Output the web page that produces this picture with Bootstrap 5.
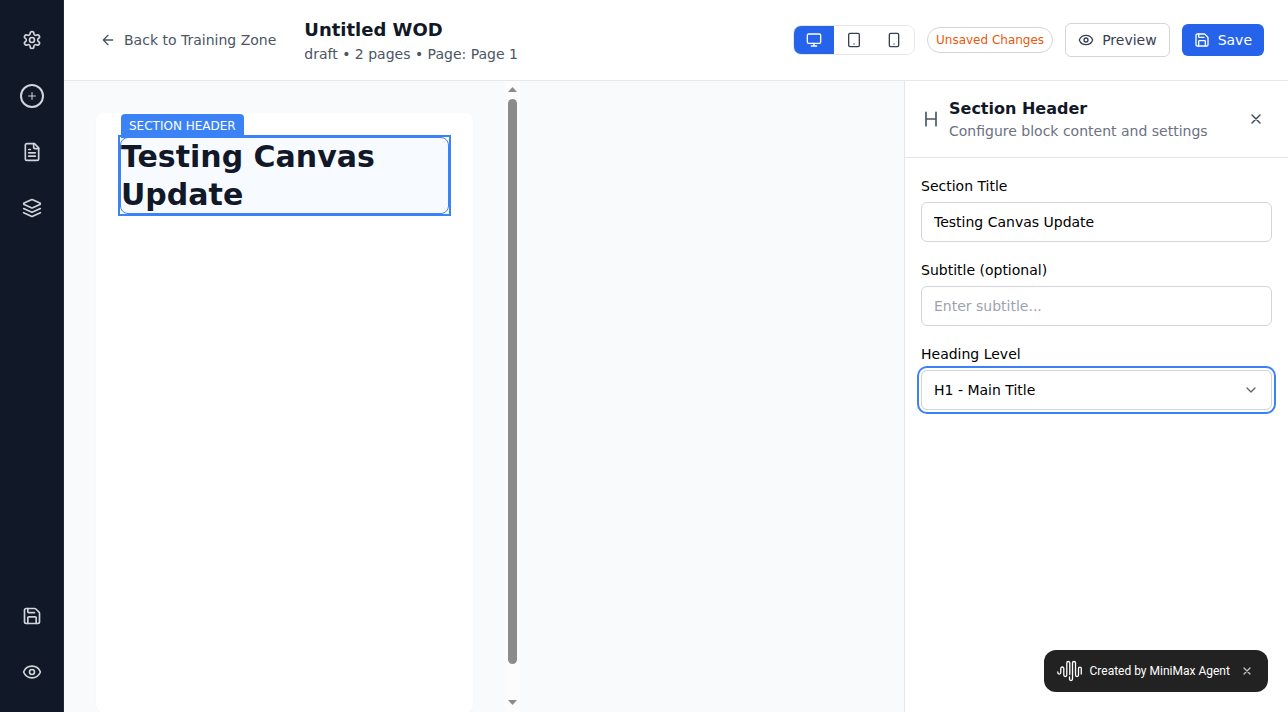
<!DOCTYPE html>
<html lang="en">
<head>
<meta charset="utf-8">
<meta name="viewport" content="width=device-width, initial-scale=1">
<title>Untitled WOD</title>
<link href="https://cdn.jsdelivr.net/npm/bootstrap@5.3.0/dist/css/bootstrap.min.css" rel="stylesheet">
<style>
body{font-family:"DejaVu Sans",sans-serif;font-size:14px;line-height:20px;color:#374151;background:#f9fafb}
svg{fill:none;stroke:currentColor;stroke-width:2;stroke-linecap:round;stroke-linejoin:round;flex-shrink:0;display:block}
.rail{width:64px;background:#111827;border-right:1px solid #1f2937;color:#d1d5db;padding:20px 0}
.rail a{width:40px;height:40px;color:inherit}
.ring{width:24px;height:24px;border:2px solid #d1d5db}
.topbar{height:81px;border-bottom:1px solid #e5e7eb;padding:0 24px 0 36px}
.back{color:#4b5563;margin-right:28px}
.doc-title{font-size:18px;line-height:28px;color:#111827}
.doc-sub{color:#4b5563}
.devices{border:1px solid #e5e7eb;border-radius:8px}
.devices button{width:40px;height:28px;background:#fff;color:#374151}
.devices .on{background:#2563eb;color:#fff}
.status{border:1px solid #d1d5db;font-size:12px;line-height:16px;padding:4px 8px;color:#ea580c}
.tool{font-size:14px;line-height:20px;border-radius:6px;gap:8px;font-weight:400}
.preview{height:34px;padding:0 12px;border:1px solid #d1d5db;color:#374151}
.save{height:32px;padding:0 12px;background:#2563eb;color:#fff}
.tools{gap:12px}
.stage{background:#f9fafb;min-width:0}
.scroller{width:456px;padding:32px 0 0 32px}
.sheet{width:377px;height:600px;border-radius:8px;background:#fff;padding:24px;box-shadow:0 1px 2px rgba(0,0,0,.03)}
/* square selection frame around the rounded block */
.frame{outline:2px solid #3b82f6}
.block{border:1px solid #3b82f6;border-radius:8px;background:#f7faff}
.block h1{font-size:30px;line-height:37.5px;color:#111827}
.tag{top:-24px;left:0;height:24px;padding:4px 8px;background:#3b82f6;color:#fff;font-size:12px;line-height:16px;border-radius:4px 4px 0 0}
.track{width:15px;background:#fcfcfc;margin-left:-15px;padding:6px 0 7px}
.thumb{width:9px;height:565px;border-radius:4.5px;background:#8b8b8b;margin-top:7px}
.track svg{fill:#8b8b8b;stroke:none}
.panel{width:384px;border-left:1px solid #e5e7eb}
.panel-head{height:77px;border-bottom:1px solid #e5e7eb;padding:16px 24px 16px 16px;gap:8px}
.panel-title{font-size:16px;line-height:24px;color:#111827}
.panel-sub{color:#6b7280}
.kind{color:#4b5563}
.fields{padding:16px;gap:16px;color:#000}
.fields label{line-height:24px;margin-bottom:4px;display:block}
.fields .form-control{height:40px;font-size:14px;line-height:20px;padding:0 12px;border:1px solid #d1d5db;border-radius:6px;color:#000}
.fields .form-control::placeholder{color:#9ca3af}
.fields .picked{box-shadow:0 0 0 2px #fff,0 0 0 4px #3b82f6}
.toast-note{right:20px;bottom:20px;width:224px;height:42px;border-radius:12px;background:#222;color:#fff;font-family:Roboto,sans-serif;font-size:12px;line-height:16px;padding:0 16px 0 13px}
.toast-note span{margin-left:7.5px}
.toast-note .dismiss{color:#c4c4c4;stroke-width:1.3}
.wave{stroke-width:1.3}
</style>
</head>
<body>
<div class="d-flex vh-100 overflow-hidden">
  <nav class="rail d-flex flex-column align-items-center flex-shrink-0 gap-3">
    <a class="d-flex align-items-center justify-content-center" href="#" aria-label="Settings"><svg width="20" height="20" viewBox="0 0 24 24"><path d="M12.22 2h-.44a2 2 0 0 0-2 2v.18a2 2 0 0 1-1 1.73l-.43.25a2 2 0 0 1-2 0l-.15-.08a2 2 0 0 0-2.73.73l-.22.38a2 2 0 0 0 .73 2.73l.15.1a2 2 0 0 1 1 1.72v.51a2 2 0 0 1-1 1.74l-.15.09a2 2 0 0 0-.73 2.73l.22.38a2 2 0 0 0 2.73.73l.15-.08a2 2 0 0 1 2 0l.43.25a2 2 0 0 1 1 1.73V20a2 2 0 0 0 2 2h.44a2 2 0 0 0 2-2v-.18a2 2 0 0 1 1-1.73l.43-.25a2 2 0 0 1 2 0l.15.08a2 2 0 0 0 2.73-.73l.22-.39a2 2 0 0 0-.73-2.73l-.15-.08a2 2 0 0 1-1-1.74v-.5a2 2 0 0 1 1-1.74l.15-.09a2 2 0 0 0 .73-2.73l-.22-.38a2 2 0 0 0-2.73-.73l-.15.08a2 2 0 0 1-2 0l-.43-.25a2 2 0 0 1-1-1.73V4a2 2 0 0 0-2-2z"/><circle cx="12" cy="12" r="3"/></svg></a>
    <a class="d-flex align-items-center justify-content-center" href="#" aria-label="Add"><span class="ring rounded-circle d-flex align-items-center justify-content-center"><svg width="12" height="12" viewBox="0 0 24 24"><path d="M5 12h14M12 5v14"/></svg></span></a>
    <a class="d-flex align-items-center justify-content-center" href="#" aria-label="Pages"><svg width="20" height="20" viewBox="0 0 24 24"><path d="M15 2H6a2 2 0 0 0-2 2v16a2 2 0 0 0 2 2h12a2 2 0 0 0 2-2V7Z"/><path d="M14 2v4a2 2 0 0 0 2 2h4M10 9H8M16 13H8M16 17H8"/></svg></a>
    <a class="d-flex align-items-center justify-content-center" href="#" aria-label="Layers"><svg width="20" height="20" viewBox="0 0 24 24"><path d="m12.83 2.18a2 2 0 0 0-1.66 0L2.6 6.08a1 1 0 0 0 0 1.83l8.58 3.91a2 2 0 0 0 1.66 0l8.58-3.9a1 1 0 0 0 0-1.83Z"/><path d="m22 17.65-9.17 4.16a2 2 0 0 1-1.66 0L2 17.65M22 12.65l-9.17 4.16a2 2 0 0 1-1.66 0L2 12.65"/></svg></a>
    <a class="d-flex align-items-center justify-content-center mt-auto" href="#" aria-label="Save"><svg width="20" height="20" viewBox="0 0 24 24"><path d="M15.2 3a2 2 0 0 1 1.4.6l3.8 3.8a2 2 0 0 1 .6 1.4V19a2 2 0 0 1-2 2H5a2 2 0 0 1-2-2V5a2 2 0 0 1 2-2z"/><path d="M17 21v-7a1 1 0 0 0-1-1H8a1 1 0 0 0-1 1v7M7 3v4a1 1 0 0 0 1 1h7"/></svg></a>
    <a class="d-flex align-items-center justify-content-center" href="#" aria-label="Preview"><svg width="20" height="20" viewBox="0 0 24 24"><path d="M2.062 12.348a1 1 0 0 1 0-.696 10.75 10.75 0 0 1 19.876 0 1 1 0 0 1 0 .696 10.75 10.75 0 0 1-19.876 0"/><circle cx="12" cy="12" r="3"/></svg></a>
  </nav>

  <div class="d-flex flex-column flex-grow-1">
    <header class="topbar bg-white d-flex align-items-center flex-shrink-0">
      <a class="back d-flex align-items-center gap-2 text-decoration-none" href="#"><svg width="16" height="16" viewBox="0 0 24 24"><path d="m12 19-7-7 7-7M19 12H5"/></svg>Back to Training Zone</a>
      <div>
        <div class="doc-title fw-bold">Untitled WOD</div>
        <div class="doc-sub">draft • 2 pages • Page: Page 1</div>
      </div>
      <div class="tools d-flex align-items-center ms-auto">
        <div class="devices d-flex overflow-hidden">
          <button class="on border-0 p-0 d-flex align-items-center justify-content-center" aria-label="Desktop"><svg width="16" height="16" viewBox="0 0 24 24"><rect width="20" height="14" x="2" y="3" rx="2"/><path d="M8 21h8M12 17v4"/></svg></button>
          <button class="border-0 p-0 d-flex align-items-center justify-content-center" aria-label="Tablet"><svg width="16" height="16" viewBox="0 0 24 24"><rect width="16" height="20" x="4" y="2" rx="2"/><path d="M12 18h.01"/></svg></button>
          <button class="border-0 p-0 d-flex align-items-center justify-content-center" aria-label="Phone"><svg width="16" height="16" viewBox="0 0 24 24"><rect width="14" height="20" x="5" y="2" rx="2"/><path d="M12 18h.01"/></svg></button>
        </div>
        <span class="status rounded-pill">Unsaved Changes</span>
        <button class="tool preview bg-white d-flex align-items-center"><svg width="16" height="16" viewBox="0 0 24 24"><path d="M2.062 12.348a1 1 0 0 1 0-.696 10.75 10.75 0 0 1 19.876 0 1 1 0 0 1 0 .696 10.75 10.75 0 0 1-19.876 0"/><circle cx="12" cy="12" r="3"/></svg>Preview</button>
        <button class="tool save border-0 d-flex align-items-center"><svg width="16" height="16" viewBox="0 0 24 24"><path d="M15.2 3a2 2 0 0 1 1.4.6l3.8 3.8a2 2 0 0 1 .6 1.4V19a2 2 0 0 1-2 2H5a2 2 0 0 1-2-2V5a2 2 0 0 1 2-2z"/><path d="M17 21v-7a1 1 0 0 0-1-1H8a1 1 0 0 0-1 1v7M7 3v4a1 1 0 0 0 1 1h7"/></svg>Save</button>
      </div>
    </header>

    <div class="d-flex flex-grow-1 overflow-hidden">
      <main class="stage d-flex flex-grow-1">
        <div class="scroller flex-shrink-0">
          <div class="sheet">
            <div class="frame">
              <div class="block position-relative">
                <span class="tag position-absolute text-nowrap">SECTION HEADER</span>
                <h1 class="fw-bold m-0">Testing Canvas Update</h1>
              </div>
            </div>
          </div>
        </div>
        <div class="track d-flex flex-column align-items-center flex-shrink-0">
          <svg width="9" height="5" viewBox="0 0 9 5"><path d="M0 5 4.5 0 9 5z"/></svg>
          <div class="thumb"></div>
          <svg class="mt-auto" width="9" height="5" viewBox="0 0 9 5"><path d="M0 0h9L4.500 5z"/></svg>
        </div>
      </main>

      <aside class="panel bg-white flex-shrink-0">
        <div class="panel-head d-flex align-items-center">
          <svg class="kind" width="20" height="20" viewBox="0 0 24 24"><path d="M6 12h12M6 20V4M18 20V4"/></svg>
          <div>
            <div class="panel-title fw-bold">Section Header</div>
            <div class="panel-sub">Configure block content and settings</div>
          </div>
          <svg class="ms-auto" width="16" height="16" viewBox="0 0 24 24"><path d="M18 6 6 18M6 6l12 12"/></svg>
        </div>
        <div class="fields d-flex flex-column">
          <div><label for="t">Section Title</label><input id="t" class="form-control" value="Testing Canvas Update"></div>
          <div><label for="s">Subtitle (optional)</label><input id="s" class="form-control" placeholder="Enter subtitle..."></div>
          <div><label>Heading Level</label>
            <div class="form-control picked d-flex align-items-center justify-content-between">H1 - Main Title<svg width="16" height="16" viewBox="0 0 24 24" opacity=".6"><path d="m6 9 6 6 6-6"/></svg></div>
          </div>
        </div>
      </aside>
    </div>
  </div>
</div>

<div class="toast-note position-fixed d-flex align-items-center">
  <svg class="wave" width="25" height="22" viewBox="0 0 25 22"><path d="M.8 12v.6a1.500 1.500 0 0 0 3 0V8.500a1.500 1.500 0 0 1 3 0V15a1.500 1.500 0 0 0 3 0V3a1.500 1.500 0 0 1 3 0v11.500M12.500 17v2a1.500 1.500 0 0 0 3 0V3a1.500 1.500 0 0 1 3 0v12a1.500 1.500 0 0 0 3 0V8.500a1.400 1.400 0 0 1 2.800 0V14"/></svg>
  <span class="text-nowrap">Created by MiniMax Agent</span>
  <svg class="dismiss ms-auto" width="10" height="10" viewBox="0 0 10 10"><path d="m2 2 6 6M8 2 2 8"/></svg>
</div>
<script src="https://cdn.jsdelivr.net/npm/bootstrap@5.3.0/dist/js/bootstrap.bundle.min.js"></script>
</body>
</html>
